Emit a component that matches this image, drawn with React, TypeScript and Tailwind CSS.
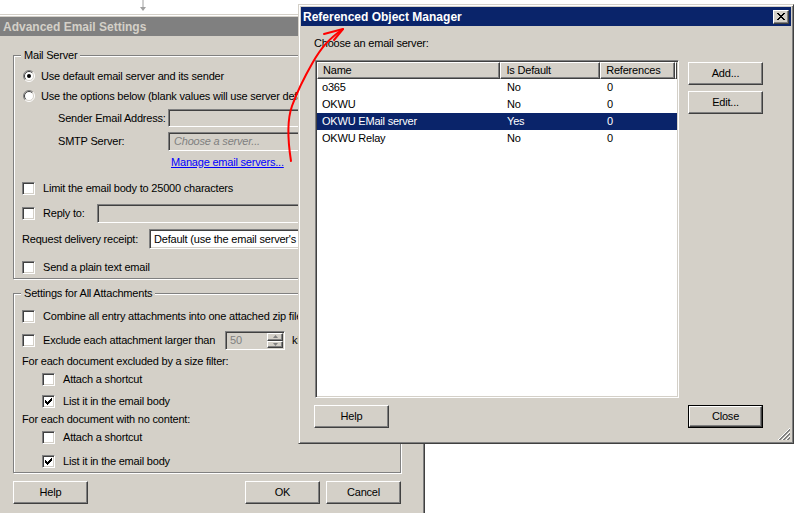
import type { ReactNode } from "react"

const raised =
  "bg-[#d4d0c8] border border-t-white border-l-white border-r-[#404040] border-b-[#404040] shadow-[inset_-1px_-1px_0_#808080]"
const sunken =
  "border border-t-[#808080] border-l-[#808080] border-r-white border-b-white shadow-[inset_1px_1px_0_#404040,inset_-1px_-1px_0_#d4d0c8]"
const windowFrame =
  "bg-[#d4d0c8] p-[2px] border border-t-[#d4d0c8] border-l-[#d4d0c8] border-r-[#404040] border-b-[#404040] shadow-[inset_1px_1px_0_#fff,inset_-1px_-1px_0_#808080]"

function Btn({ children, isDefault }: { children: ReactNode; isDefault?: boolean }) {
  if (isDefault) {
    return (
      <div className="w-[75px] h-[23px] border border-black">
        <div className={`${raised} w-full h-full flex items-center justify-center`}>{children}</div>
      </div>
    )
  }
  return <div className={`${raised} w-[75px] h-[23px] flex items-center justify-center`}>{children}</div>
}

function Check({ checked }: { checked?: boolean }) {
  const mark = [[6], [5, 6], [0, 4, 5, 6], [0, 1, 3, 4, 5], [0, 1, 2, 3, 4], [1, 2, 3], [2]]
  return (
    <span className={`${sunken} w-[13px] h-[13px] shrink-0 bg-white flex items-center justify-center`}>
      {checked && (
        <svg width="7" height="7" viewBox="0 0 7 7" shapeRendering="crispEdges">
          {mark.map((row, y) => row.map((x) => <rect key={`${x}-${y}`} x={x} y={y} width="1" height="1" fill="#000" />))}
        </svg>
      )}
    </span>
  )
}

function Radio({ checked }: { checked?: boolean }) {
  return (
    <svg width="12" height="12" viewBox="0 0 12 12" className="shrink-0">
      <circle cx="6" cy="6" r="5" fill="#fff" />
      <path d="M2.1 9.9 A5.5 5.5 0 0 1 9.9 2.1" stroke="#808080" fill="none" />
      <path d="M9.9 2.1 A5.5 5.5 0 0 1 2.1 9.9" stroke="#fff" fill="none" />
      <path d="M2.8 9.2 A4.5 4.5 0 0 1 9.2 2.8" stroke="#404040" fill="none" />
      <path d="M9.2 2.8 A4.5 4.5 0 0 1 2.8 9.2" stroke="#d4d0c8" fill="none" />
      {checked && <circle cx="6" cy="6" r="2" fill="#000" />}
    </svg>
  )
}

function Field({ className, children }: { className: string; children?: ReactNode }) {
  return <div className={`${sunken} p-[1px] flex items-center ${className}`}>{children}</div>
}

function Group({ label, className, children }: { label: string; className: string; children: ReactNode }) {
  return (
    <div className={`relative ml-[13px] w-[388px] border border-[#808080] shadow-[1px_1px_0_#fff,inset_1px_1px_0_#fff] pl-[8px] pb-[1px] ${className}`}>
      <span className="absolute -top-[7px] left-[7px] px-[3px] bg-[#d4d0c8] leading-[13px]">{label}</span>
      {children}
    </div>
  )
}

function Spin() {
  return (
    <div className={`${sunken} w-[60px] h-[19px] bg-[#d4d0c8] p-[1px] flex`}>
      <span className="flex-1 flex items-center pl-[3px] text-[#808080]">50</span>
      <div className="w-[16px] flex flex-col">
        <div className={`${raised} h-[8px] flex items-center justify-center`}>
          <svg width="5" height="3" viewBox="0 0 5 3"><path d="M2.5 0 L5 3 L0 3 Z" fill="#808080" /></svg>
        </div>
        <div className={`${raised} h-[7px] flex items-center justify-center`}>
          <svg width="5" height="3" viewBox="0 0 5 3"><path d="M0 0 L5 0 L2.5 3 Z" fill="#808080" /></svg>
        </div>
      </div>
    </div>
  )
}

function CloseBox() {
  const x = [[0, 1, 6, 7], [1, 2, 5, 6], [2, 3, 4, 5], [3, 4], [2, 3, 4, 5], [1, 2, 5, 6], [0, 1, 6, 7]]
  return (
    <div className={`${raised} w-[16px] h-[14px] flex items-center justify-center`}>
      <svg width="8" height="7" viewBox="0 0 8 7" shapeRendering="crispEdges">
        {x.map((row, yy) => row.map((xx) => <rect key={`${xx}-${yy}`} x={xx} y={yy} width="1" height="1" fill="#000" />))}
      </svg>
    </div>
  )
}

function Grip() {
  return (
    <svg width="13" height="13" viewBox="0 0 13 13" shapeRendering="crispEdges" className="absolute right-[3px] bottom-[3px]">
      {[1, 5, 9].map((o) => (
        <g key={o}>
          <line x1={13} y1={o} x2={o} y2={13} stroke="#fff" />
          <line x1={13} y1={o + 1} x2={o + 1} y2={13} stroke="#808080" />
          <line x1={13} y1={o + 2} x2={o + 2} y2={13} stroke="#808080" />
        </g>
      ))}
    </svg>
  )
}

const servers = [
  { name: "o365", def: "No", refs: "0" },
  { name: "OKWU", def: "No", refs: "0" },
  { name: "OKWU EMail server", def: "Yes", refs: "0", selected: true },
  { name: "OKWU Relay", def: "No", refs: "0" },
]

function ServerList() {
  const head = `${raised} h-full flex items-center pl-[5px]`
  return (
    <div className={`${sunken} w-[364px] h-[338px] bg-white p-[1px]`}>
      <div className="flex h-[17px]">
        <div className={`${head} w-[184px]`}>Name</div>
        <div className={`${head} w-[100px]`}>Is Default</div>
        <div className={`${head} w-[75px]`}>References</div>
        <div className={`${raised} h-full flex-1`} />
      </div>
      {servers.map((s) => (
        <div key={s.name} className={`flex h-[17px] items-center ${s.selected ? "bg-[#0a246a] text-white" : ""}`}>
          <span className="w-[184px] pl-[5px]">{s.name}</span>
          <span className="w-[100px] pl-[6px]">{s.def}</span>
          <span className="w-[75px] pl-[6px]">{s.refs}</span>
        </div>
      ))}
    </div>
  )
}

function EmailSettings() {
  return (
    <div className={`absolute left-[-3px] top-[14px] w-[428px] h-[520px] ${windowFrame}`}>
      <div className="h-[19px] bg-[#808080] flex items-center pl-[3px] text-[#d4d0c8] font-bold text-[12px] tracking-normal">
        Advanced Email Settings
      </div>

      <Group label="Mail Server" className="mt-[19px]">
        <div className="flex items-center h-[20px] mt-[10px] pl-[1px] gap-[6px]">
          <Radio checked />
          Use default email server and its sender
        </div>
        <div className="flex items-center h-[20px] pl-[1px] gap-[6px]">
          <Radio />
          Use the options below (blank values will use server defaults)
        </div>
        <div className="flex items-center h-[18px] mt-[3px] pl-[36px]">
          <span className="w-[110px]">Sender Email Address:</span>
          <Field className="w-[225px] h-[18px] bg-[#d4d0c8]" />
        </div>
        <div className="flex items-center h-[19px] mt-[5px] pl-[36px]">
          <span className="w-[110px]">SMTP Server:</span>
          <Field className="w-[225px] h-[19px] bg-[#d4d0c8]">
            <span className="pl-[4px] italic text-[#808080]">Choose a server...</span>
          </Field>
        </div>
        <div className="flex items-center h-[16px] mt-[3px] pl-[149px]">
          <span className="text-[#0000ff] underline">Manage email servers...</span>
        </div>
        <div className="flex items-center h-[20px] mt-[8px] gap-[8px]">
          <Check />
          Limit the email body to 25000 characters
        </div>
        <div className="flex items-center h-[19px] mt-[6px]">
          <Check />
          <span className="ml-[8px] w-[54px]">Reply to:</span>
          <Field className="w-[290px] h-[19px] bg-[#d4d0c8]" />
        </div>
        <div className="flex items-center h-[20px] mt-[6px]">
          <span className="w-[127px]">Request delivery receipt:</span>
          <Field className="w-[240px] h-[20px] bg-white">
            <span className="pl-[3px]">Default (use the email server's setting)</span>
          </Field>
        </div>
        <div className="flex items-center h-[20px] mt-[8px] gap-[8px]">
          <Check />
          Send a plain text email
        </div>
      </Group>

      <Group label="Settings for All Attachments" className="mt-[14px]">
        <div className="flex items-center h-[20px] mt-[12px] gap-[8px]">
          <Check />
          Combine all entry attachments into one attached zip file
        </div>
        <div className="flex items-center h-[20px] mt-[4px]">
          <Check />
          <span className="ml-[8px] w-[182px]">Exclude each attachment larger than</span>
          <Spin />
          <span className="ml-[7px]">kB</span>
        </div>
        <div className="flex items-center h-[18px] mt-[2px]">For each document excluded by a size filter:</div>
        <div className="flex items-center h-[18px] pl-[20px] gap-[8px]">
          <Check />
          Attach a shortcut
        </div>
        <div className="flex items-center h-[20px] mt-[3px] pl-[20px] gap-[8px]">
          <Check checked />
          List it in the email body
        </div>
        <div className="flex items-center h-[17px]">For each document with no content:</div>
        <div className="flex items-center h-[18px] pl-[20px] gap-[8px]">
          <Check />
          Attach a shortcut
        </div>
        <div className="flex items-center h-[20px] mt-[5px] pl-[20px] gap-[8px]">
          <Check checked />
          List it in the email body
        </div>
      </Group>

      <div className="flex justify-between ml-[13px] w-[388px] mt-[8px]">
        <Btn>Help</Btn>
        <div className="flex gap-[6px]">
          <Btn>OK</Btn>
          <Btn>Cancel</Btn>
        </div>
      </div>
    </div>
  )
}

function ObjectManager() {
  return (
    <div className={`absolute left-[298px] top-[4px] w-[496px] h-[440px] ${windowFrame}`}>
      <div className="h-[19px] bg-[#0a246a] flex items-center justify-between pl-[2px] pr-[2px]">
        <span className="text-white font-bold text-[12px] tracking-normal">Referenced Object Manager</span>
        <CloseBox />
      </div>
      <div className="flex items-center h-[14px] mt-[10px] pl-[13px]">Choose an email server:</div>
      <div className="flex mt-[10px] ml-[14px]">
        <ServerList />
        <div className="flex flex-col gap-[6px] ml-[9px] mt-[2px]">
          <Btn>Add...</Btn>
          <Btn>Edit...</Btn>
        </div>
      </div>
      <div className="flex justify-between mt-[7px] ml-[13px] w-[449px]">
        <Btn>Help</Btn>
        <Btn isDefault>Close</Btn>
      </div>
      <Grip />
    </div>
  )
}

export default function App() {
  return (
    <div className="relative w-[801px] h-[513px] overflow-hidden bg-white text-black text-[11px] leading-none tracking-[-0.2px] whitespace-nowrap font-['Liberation_Sans',Arial,sans-serif]">
      <svg width="8" height="12" viewBox="0 0 8 12" className="absolute left-[139px] top-0">
        <line x1="4" y1="0" x2="4" y2="8" stroke="#a0a0a0" />
        <path d="M1 7 L7 7 L4 11 Z" fill="#a0a0a0" />
      </svg>
      <EmailSettings />
      <ObjectManager />
      <svg width="801" height="513" viewBox="0 0 801 513" className="absolute inset-0 pointer-events-none">
        <path
          d="M291 161 C288 142 287 120 292 106 C297 92 305 76 313 62 C320 50 327 40 343 29"
          stroke="#ff0000"
          strokeWidth="2"
          fill="none"
          strokeLinecap="round"
        />
        <path d="M324 34 L343 29 L334 40" stroke="#ff0000" strokeWidth="2" fill="none" strokeLinecap="round" strokeLinejoin="round" />
      </svg>
    </div>
  )
}
